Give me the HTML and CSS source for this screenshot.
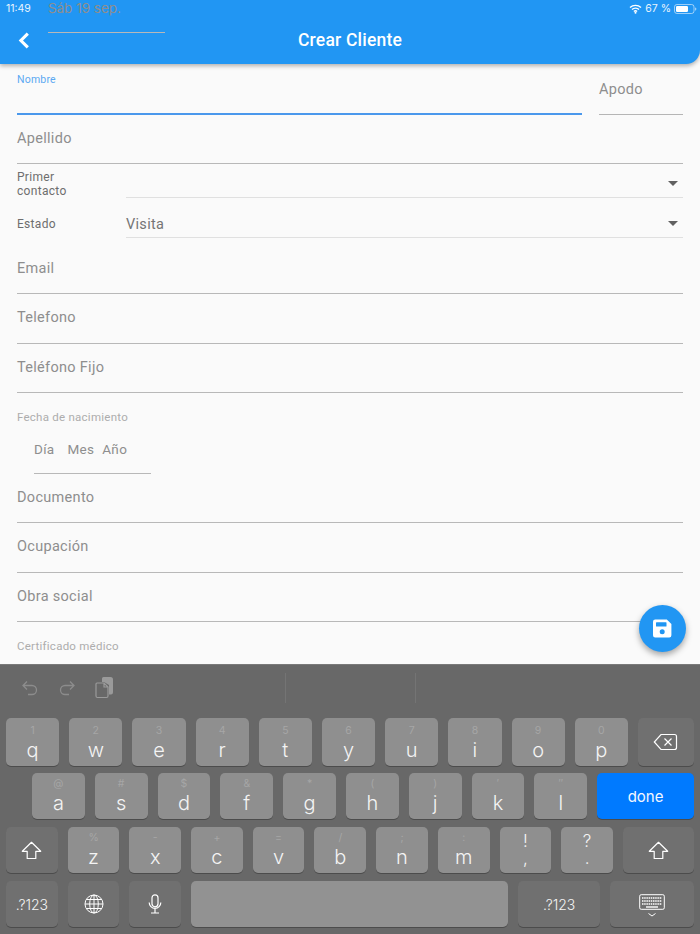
FILE: index.html
```html
<!DOCTYPE html>
<html lang="es">
<head>
<meta charset="utf-8">
<title>Crear Cliente</title>
<link rel="stylesheet" href="styles.css">
</head>
<body>
<div class="page">
  <header class="appbar">
    <div class="status">
      <span class="time">11:49</span><span class="date">Sáb 19 sep.</span>
      <span class="status-right">
        <svg class="wifi" width="13" height="10" viewBox="0 0 13 10"><path d="M1 3.6a8 8 0 0 1 11 0M3 5.6a5.1 5.1 0 0 1 7 0M4.9 7.4a2.4 2.4 0 0 1 3.2 0" fill="none" stroke="#fff" stroke-width="1.4"/><circle cx="6.5" cy="8.8" r="1" fill="#fff"/></svg>
        <span class="pct">67 %</span>
        <svg class="battery" width="23" height="10" viewBox="0 0 23 10"><rect x=".5" y=".5" width="19.5" height="9" rx="2.4" fill="none" stroke="#fff" stroke-opacity=".55"/><rect x="2" y="2" width="12" height="6" rx="1.2" fill="#fff"/><path d="M21 3.4c.9.2 1.4.8 1.4 1.6s-.5 1.4-1.4 1.6z" fill="#fff" fill-opacity=".55"/></svg>
      </span>
    </div>
    <div class="bar">
      <svg class="back" width="12" height="17" viewBox="0 0 12 17"><path d="M9.8 1.6 2.9 8.5l6.9 6.9" fill="none" stroke="#fff" stroke-width="3.1"/></svg>
      <h1 class="title">Crear Cliente</h1>
    </div>
  </header>

  <main class="form">
    <div class="name-row">
      <div class="nombre"><span class="float-label">Nombre</span></div>
      <div class="apodo">Apodo</div>
    </div>
    <div class="field">Apellido</div>
    <div class="select-row contact">
      <div class="select-label">Primer<br>contacto</div>
      <div class="select"><span class="select-value"></span><i class="caret"></i></div>
    </div>
    <div class="select-row state">
      <div class="select-label">Estado</div>
      <div class="select"><span class="select-value">Visita</span><i class="caret"></i></div>
    </div>
    <div class="field first">Email</div>
    <div class="field">Telefono</div>
    <div class="field">Teléfono Fijo</div>
    <div class="section-label">Fecha de nacimiento</div>
    <div class="date"><span class="d">Día</span><span class="m">Mes</span><span class="y">Año</span></div>
    <div class="field">Documento</div>
    <div class="field">Ocupación</div>
    <div class="field">Obra social</div>
    <div class="section-label">Certificado médico</div>
    <button class="fab" aria-label="Guardar">
      <svg width="19" height="19" viewBox="0 0 19 19"><path d="M2.2 .6h11.6L18.4 5v11.2a2.2 2.2 0 0 1-2.2 2.2h-14A2.2 2.2 0 0 1 0 16.200V2.800A2.200 2.200 0 0 1 2.200 .6z" fill="#fff"/><rect x="3" y="3.200" width="10.500" height="4.300" rx=".6" fill="#2196f3"/><circle cx="9.200" cy="12.700" r="2.500" fill="#2196f3"/></svg>
    </button>
  </main>

  <section class="keyboard">
    <div class="tools">
      <svg class="tool" width="18" height="18" viewBox="0 0 18 18"><path d="M6 2.500 2 6.500l4 4M2 6.500h9a4.500 4.500 0 0 1 0 9H7" fill="none" stroke="#8c8c8c" stroke-width="1.300"/></svg>
      <svg class="tool redo" width="18" height="18" viewBox="0 0 18 18"><path d="m12 2.500 4 4-4 4M16 6.500H7a4.500 4.500 0 0 0 0 9h4" fill="none" stroke="#8c8c8c" stroke-width="1.300"/></svg>
      <svg class="tool paste" width="19" height="22" viewBox="0 0 19 22"><path d="M7 1.500A1.500 1.500 0 0 1 8.500 0h7A2.500 2.500 0 0 1 18 2.500v13a2 2 0 0 1-2 2h-2V8l-5-3H7z" fill="#9a9a9a"/><path d="M2 6h7l4 4v9a1.500 1.500 0 0 1-1.500 1.500h-9A1.500 1.500 0 0 1 1 19V7a1 1 0 0 1 1-1zM9 6v4h4" fill="#686868" stroke="#9a9a9a" stroke-width="1.200"/></svg>
      <i class="divider one"></i>
      <i class="divider two"></i>
    </div>

    <div class="row row1">
      <div class="key"><small>1</small><b>q</b></div>
      <div class="key"><small>2</small><b>w</b></div>
      <div class="key"><small>3</small><b>e</b></div>
      <div class="key"><small>4</small><b>r</b></div>
      <div class="key"><small>5</small><b>t</b></div>
      <div class="key"><small>6</small><b>y</b></div>
      <div class="key"><small>7</small><b>u</b></div>
      <div class="key"><small>8</small><b>i</b></div>
      <div class="key"><small>9</small><b>o</b></div>
      <div class="key"><small>0</small><b>p</b></div>
      <div class="key fn grow">
        <svg width="25" height="18" viewBox="0 0 25 18"><path d="M8 1.500h13.500a2 2 0 0 1 2 2v11a2 2 0 0 1-2 2H8L1.300 9z" fill="none" stroke="#fff" stroke-width="1.200"/><path d="m11.500 5.500 7 7m0-7-7 7" fill="none" stroke="#fff" stroke-width="1.200"/></svg>
      </div>
    </div>
    <div class="row row2">
      <div class="key"><small>@</small><b>a</b></div>
      <div class="key"><small>#</small><b>s</b></div>
      <div class="key"><small>$</small><b>d</b></div>
      <div class="key"><small>&amp;</small><b>f</b></div>
      <div class="key"><small>*</small><b>g</b></div>
      <div class="key"><small>(</small><b>h</b></div>
      <div class="key"><small>)</small><b>j</b></div>
      <div class="key"><small>′</small><b>k</b></div>
      <div class="key"><small>″</small><b>l</b></div>
      <div class="key done grow">done</div>
    </div>
    <div class="row row3">
      <div class="key fn shift">
        <svg width="21" height="19" viewBox="0 0 21 19"><path d="M10.500 1.300 1.300 10.300h4.900v7.200h8.600v-7.200h4.900z" fill="none" stroke="#fff" stroke-width="1.200" stroke-linejoin="round"/></svg>
      </div>
      <div class="key"><small>%</small><b>z</b></div>
      <div class="key"><small>-</small><b>x</b></div>
      <div class="key"><small>+</small><b>c</b></div>
      <div class="key"><small>=</small><b>v</b></div>
      <div class="key"><small>/</small><b>b</b></div>
      <div class="key"><small>;</small><b>n</b></div>
      <div class="key"><small>:</small><b>m</b></div>
      <div class="key punct"><em>!</em><em>,</em></div>
      <div class="key punct"><em>?</em><em>.</em></div>
      <div class="key fn grow">
        <svg width="21" height="19" viewBox="0 0 21 19"><path d="M10.500 1.300 1.300 10.300h4.900v7.200h8.600v-7.200h4.900z" fill="none" stroke="#fff" stroke-width="1.200" stroke-linejoin="round"/></svg>
      </div>
    </div>
    <div class="row row4">
      <div class="key fn num">.?123</div>
      <div class="key fn icon-key">
        <svg width="20" height="20" viewBox="0 0 20 20" fill="none" stroke="#fff" stroke-width="1"><circle cx="10" cy="10" r="9"/><ellipse cx="10" cy="10" rx="4.300" ry="9"/><path d="M10 1v18M1 10h18M2.300 5.500h15.400M2.300 14.500h15.400"/></svg>
      </div>
      <div class="key fn icon-key">
        <svg width="14" height="20" viewBox="0 0 14 20" fill="none" stroke="#fff" stroke-width="1.200"><rect x="4" y=".8" width="6" height="12" rx="3"/><path d="M1.200 8.500a5.800 5.800 0 0 0 11.600 0M7 14.500v4M3 19h8"/></svg>
      </div>
      <div class="key space"></div>
      <div class="key fn num wide">.?123</div>
      <div class="key fn grow">
        <svg class="kbd" width="26" height="24" viewBox="0 0 26 24" fill="none" stroke="#fff"><rect x=".7" y=".7" width="24.600" height="14.600" rx="1.500" stroke-width="1"/><path d="M3 4h20M3 7h20M3 10h20" stroke-width="1.500" stroke-dasharray="1.500 .7"/><path d="M7 13h12" stroke-width="1.400"/><path d="m9.500 19.500 3.500 2.500 3.500-2.500" stroke-width="1"/></svg>
      </div>
    </div>
  </section>
</div>
</body>
</html>
```
FILE: styles.css
```css
* { box-sizing: border-box; }
html, body { margin: 0; padding: 0; }
body { background: #fafafa; font-family: Roboto, "Liberation Sans", sans-serif; }
.page { width: 700px; height: 934px; display: flex; flex-direction: column; overflow: hidden; }

.appbar { height: 64px; flex: none; background: #2196f3; color: #fff; border-bottom-right-radius: 14px; box-shadow: 0 2px 4px rgba(0,0,0,.3); position: relative; z-index: 2; }
.status { height: 16px; padding: 1px 3px 0 6px; display: flex; align-items: center; font: 400 10.5px/14px Inter, sans-serif; color: #e9f4fe; }
.date { margin-left: 9px; }
.status-right { margin-left: auto; display: flex; align-items: center; gap: 3px; }
.bar { height: 48px; display: flex; align-items: center; justify-content: center; position: relative; }
.back { position: absolute; left: 18px; top: 16px; }
.title { margin: 0; font: 500 17.5px/22px Roboto, sans-serif; letter-spacing: .2px; padding-bottom: 1px; }

.form { position: relative; height: 601px; flex: none; padding: 0 17px; color: #8e8e8e; font-size: 14.5px; letter-spacing: .3px; }
.name-row { display: flex; gap: 17px; height: 50.500px; }
.nombre { flex: 1; border-bottom: 2px solid #4a98ec; padding-top: 9px; }
.float-label { display: block; font-size: 10.500px; line-height: 14px; color: #5aa9f2; letter-spacing: .2px; }
.apodo { width: 84px; border-bottom: 1px solid #b5b5b5; padding-top: 17px; line-height: 17px; }
.field { height: 49.500px; border-bottom: 1px solid #b8b8b8; display: flex; align-items: center; padding-bottom: 1px; }
.field.first { height: 56px; padding-top: 6.500px; }
.select-row { display: flex; }
.select-row.contact { height: 34px; }
.select-row.state { height: 40px; }
.select-label { width: 109px; flex: none; font-size: 12px; line-height: 14px; color: #6e6e6e; }
.contact .select-label { padding-top: 6px; }
.state .select-label { padding-top: 19px; }
.select { flex: 1; border-bottom: 1px solid #e0e0e0; position: relative; }
.select-value { display: block; padding-top: 18px; line-height: 17px; color: #757575; }
.caret { position: absolute; right: 5px; bottom: 11px; border: 5px solid transparent; border-top-color: #616161; border-bottom-width: 0; }
.state .caret { bottom: 11px; }
.section-label { height: 32px; padding-top: 16px; font-size: 11.500px; line-height: 16px; color: #adadad; letter-spacing: .25px; }
.date { margin-left: 17px; width: 117px; height: 48.500px; border-bottom: 1px solid #b8b8b8; display: flex; align-items: center; color: #8e8e8e; font-size: 13.500px; }
.date .m { margin-left: 13px; }
.date .y { margin-left: 8px; }
.fab { position: absolute; left: 639px; top: 541px; width: 47px; height: 47px; padding: 0; border: 0; border-radius: 50%; background: #2196f3; box-shadow: 0 3px 6px rgba(0,0,0,.35); display: flex; align-items: center; justify-content: center; }

.keyboard { flex: 1; background: #686868; padding: 0 6px; display: flex; flex-direction: column; position: relative; z-index: 1; box-shadow: 0 -1px 0 #7a7a7a; }
.tools { height: 53px; flex: none; position: relative; display: flex; align-items: center; padding: 0 0 7px 15px; }
.tool.redo { margin-left: 19px; }
.tool.paste { margin-left: 19px; }
.divider { position: absolute; top: 8px; width: 1px; height: 30px; background: #747474; }
.divider.one { left: 279px; }
.divider.two { left: 409px; }

.row { display: flex; gap: 10px; flex: none; }
.row1 { height: 48px; margin-bottom: 7px; --w: 53.200px; }
.row2 { height: 46px; margin-bottom: 8px; padding-left: 26px; --w: 52.800px; }
.row3 { height: 46px; margin-bottom: 8px; --w: 51.700px; }
.row4 { height: 46px; --w: 51.700px; }
.key { flex: 0 0 var(--w); border-radius: 5px; background: #8f8f8f; box-shadow: 0 1px 0 #4c4c4c; color: #f4f4f4; display: flex; flex-direction: column; align-items: center; justify-content: flex-end; font-family: Inter, "Liberation Sans", sans-serif; position: relative; }
.key small { position: absolute; top: 4px; left: 0; right: 0; text-align: center; font-size: 10.500px; line-height: 13px; color: #a6a6a6; font-weight: 400; }
.key b { font-weight: 300; font-size: 20px; line-height: 24px; padding-bottom: 4px; }
.row1 .key small { top: 6px; }
.grow { flex: 1 1 auto; }
.fn { background: #707070; justify-content: center; }
.fn svg { display: block; }
.done { background: #007aff; justify-content: center; color: #f2f7ff; font-size: 15px; }
.punct { justify-content: center; gap: 0; }
.punct em { font-style: normal; font-weight: 300; font-size: 17px; line-height: 17px; }
.num { font-size: 14px; font-weight: 300; }
.num.wide { flex-basis: 82px; }
.space { flex: 0 0 317px; background: #929292; }
.kbd { margin-top: 4px; }
```
